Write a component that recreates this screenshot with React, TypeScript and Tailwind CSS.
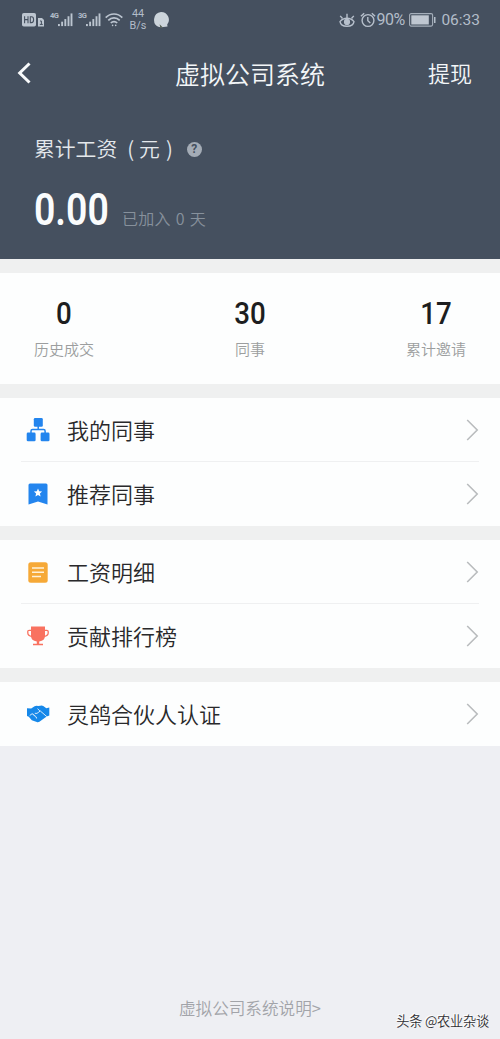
import React from "react";

const SANS = "font-['Noto_Sans_CJK_SC',sans-serif]";

function Signal() {
  return (
    <svg width="16" height="14" viewBox="0 0 16 14" fill="#bcc5d0" className="block">
      <rect x="0" y="11.3" width="2" height="2.2" />
      <rect x="3.4" y="8.8" width="2" height="4.7" />
      <rect x="6.8" y="6" width="2" height="7.5" />
      <rect x="10.2" y="3" width="2" height="10.5" />
      <rect x="13.4" y="0" width="2" height="13.5" />
    </svg>
  );
}

function StatusBar() {
  return (
    <div className="flex h-10 items-center pl-[22px] pr-[20px] font-[Roboto,sans-serif] text-[#b3bdc9]">
      <svg width="23" height="14" viewBox="0 0 23 14" className="shrink-0">
        <rect x="0" y="0" width="14" height="13.5" rx="1.8" fill="#bcc5d0" />
        <path d="M2.6 3.2v7M6 3.2v7M2.6 6.6H6M8.3 3.8v5.8h1.2c1.500 0 2.100-.9 2.100-2.900s-.6-2.900-2.100-2.900z" fill="none" stroke="#45505f" strokeWidth="1.1" />
        <path d="M16 5h4l2 2v6.500h-6z" fill="#bcc5d0" />
        <path d="M18 8h1.400v3.400M17.800 11.400h3" fill="none" stroke="#45505f" strokeWidth="1" />
      </svg>
      <div className="ml-[5px] flex w-[23px] shrink-0">
        <span className="-mt-[2px] w-2 text-[7.5px] leading-[9px] font-bold tracking-[-0.6px]">4G</span>
        <Signal />
      </div>
      <div className="ml-[5px] flex w-[23px] shrink-0">
        <span className="-mt-[2px] w-2 text-[7.5px] leading-[9px] font-bold tracking-[-0.6px]">3G</span>
        <Signal />
      </div>
      <svg width="18" height="14" viewBox="0 0 18 14" className="ml-[4px] shrink-0" fill="none" stroke="#bcc5d0" strokeWidth="1.7">
        <path d="M.7 4.6C5.4-.2 12.6-.2 17.3 4.6" />
        <path d="M3.3 7.3c3.2-3.3 8.2-3.3 11.4 0" />
        <path d="M5.8 10c1.8-1.9 4.6-1.9 6.4 0" />
        <circle cx="7.6" cy="12.4" r=".8" fill="#bcc5d0" stroke="none" />
        <circle cx="10.7" cy="12.4" r=".8" fill="#bcc5d0" stroke="none" />
      </svg>
      <div className="ml-[6px] w-[18px] shrink-0 text-center text-[10.800px] leading-[12px]">
        <div>44</div>
        <div>B/s</div>
      </div>
      <svg width="16" height="16" viewBox="0 0 16 16" className="ml-[6px] shrink-0">
        <path d="M8 0a7.800 7.800 0 0 1 6.200 12.600l.3 1.800-2 .3-4.200.5-2.300-.2A7.800 7.800 0 0 1 8 0z" fill="#ccd4db" />
        <path d="m6.600 12.200 3.300 3.300-2.600.2z" fill="#566154" />
      </svg>
      <svg width="16" height="15" viewBox="0 0 16 15" className="ml-auto shrink-0" fill="none" stroke="#b7c0cc" strokeWidth="1.4">
        <path d="M1 8.600c3.600-4.400 10.400-4.400 14 0-1 6.200-13 6.200-14 0z" />
        <circle cx="8" cy="8.900" r="2.400" fill="#b7c0cc" />
        <path d="M8 5V.800M3.500 5.500 1.200 2.900M12.500 5.500l2.300-2.600" />
      </svg>
      <svg width="16" height="16" viewBox="0 0 16 16" className="ml-[5px] shrink-0" fill="none" stroke="#b7c0cc" strokeWidth="1.4">
        <circle cx="8" cy="8.500" r="5.900" />
        <path d="M7.800 5v3.700l2.500 2.300M.9 4.300l3.300-3M15.100 4.300l-3.300-3" />
      </svg>
      <span className="w-[31px] shrink-0 text-[16px] leading-5 tracking-[-0.5px]">90%</span>
      <svg width="27" height="14" viewBox="0 0 27 14" className="ml-[2px] shrink-0">
        <rect x=".6" y=".6" width="23" height="12.500" rx="1.500" fill="none" stroke="#a5afbb" strokeWidth="1.100" />
        <rect x="2.300" y="2.300" width="17.500" height="9.200" fill="#bfc7d1" />
        <rect x="25" y="4" width="1.500" height="6" fill="#b3bdc9" />
      </svg>
      <span className="ml-[5px] shrink-0 text-[15.500px] leading-5">06:33</span>
    </div>
  );
}

function Stat({ value, label }: { value: string; label: string }) {
  return (
    <div className="flex w-[62px] flex-col items-center">
      <span className="block scale-x-[0.88] font-[Roboto,sans-serif] text-[31.5px] leading-8 font-medium text-[#1d1e20]">{value}</span>
      <span className="mt-[9px] text-[15px] leading-5 whitespace-nowrap text-[#9c9e9f] font-[350]">{label}</span>
    </div>
  );
}

function Row({ icon, label }: { icon: React.ReactNode; label: string }) {
  return (
    <div className="flex h-16 items-center pl-[25px] pr-[21px]">
      <span className="flex w-[25px] shrink-0 justify-center">{icon}</span>
      <span className="ml-[17px] pb-[2px] text-[22px] leading-8 text-[#29292b] font-[350]">{label}</span>
      <svg width="13" height="22" viewBox="0 0 13 22" className="ml-auto" fill="none" stroke="#b9bcbe" strokeWidth="1.6">
        <path d="m1.200 1 10 10-10 10" />
      </svg>
    </div>
  );
}

const Divider = () => <div className="-mt-px ml-[21px] mr-[21px] h-px bg-[#eff0f1]" />;

const TeamIcon = () => (
  <svg width="24" height="24" viewBox="0 0 24 24" fill="#2385ee">
    <rect x="7.800" y="0" width="9" height="8.800" rx="1.300" />
    <rect x=".7" y="14.600" width="8.900" height="8.700" rx="1.300" />
    <rect x="14.600" y="14.600" width="8.900" height="8.700" rx="1.300" />
    <path d="M12.200 8v3.400M5 15v-2q0-1.500 1.500-1.500h11.100q1.500 0 1.500 1.500v2" fill="none" stroke="#2385ee" strokeWidth="1.500" />
  </svg>
);

const BookmarkIcon = () => (
  <svg width="20" height="22" viewBox="0 0 20 22">
    <path d="M2 .5h16q1.500 0 1.500 1.500v19.500L10 18.500.5 21.500V2Q.5.5 2 .5z" fill="#2385ee" />
    <path d="m10 5.600 1.200 2.700 2.900.3-2.200 2 .7 2.900-2.600-1.500-2.600 1.500.7-2.900-2.200-2 2.900-.3z" fill="#fff" />
  </svg>
);

const BillIcon = () => (
  <svg width="20" height="21" viewBox="0 0 20 21">
    <rect x=".3" y=".2" width="19.400" height="20.500" rx="2.500" fill="#f6a937" />
    <path d="M4 6h12M4 10.300h12M4 14.500h9" stroke="#fff2da" strokeWidth="1.400" />
  </svg>
);

const TrophyIcon = () => (
  <svg width="22" height="20" viewBox="0 0 22 20" fill="#f97260">
    <path d="M4 .500h14v9.300q0 5-5.800 5.600v2.400h3.800v1.500H6v-1.500h3.800v-2.400Q4 14.800 4 9.800z" />
    <path d="M5 4.300H2.200Q.8 4.300.8 5.600v1.500q0 2.800 4.300 3.500M17 4.300h2.800q1.400 0 1.400 1.300v1.500q0 2.800-4.300 3.500" fill="none" stroke="#f97260" strokeWidth="1.300" />
  </svg>
);

const HandshakeIcon = () => (
  <svg width="24" height="18" viewBox="0 0 24 18">
    <path d="M1 3.200 5.200 3.600 8.600 1.300q1.700-1 3.600-.2L14.300.8q1.500-.5 3 .3l3 2.100 3-.6v8l-2.600 1-7.300 5.100q-1.200.8-2.600.3l-5-1.700-3-3.600-1.800-.6z" fill="#1688e9" />
    <path d="M8.800 8.300q2.300.8 4-1.200l1.400-1.200 6.600 5.700M13.900 5.900 11.500 3.700M3.700 10.500l2.300-1.700q1.600-.2 1.600 1.400 1.800-.2 1.700 1.600 1.700 0 1.300 1.700" fill="none" stroke="#e9f4fd" strokeWidth=".9" />
  </svg>
);

export default function App() {
  return (
    <div className={`flex h-[1039px] w-[500px] flex-col overflow-hidden bg-[#eeeff3] ${SANS}`}>
      <header className="h-[259px] shrink-0 bg-[#45505f]">
        <StatusBar />
        <div className="grid h-[66px] grid-cols-[100px_1fr_100px] items-center text-[#f3f6f8]">
          <svg width="14" height="22" viewBox="0 0 14 22" className="ml-[17px]" fill="none" stroke="#f8fafb" strokeWidth="3">
            <path d="M12.500 1.500 2.700 11l9.800 9.500" />
          </svg>
          <h1 className="text-center text-[25px] leading-9 font-[350]">虚拟公司系统</h1>
          <span className="pb-[2px] pr-[28px] text-right text-[22px] leading-8 font-[350]">提现</span>
        </div>
        <div className="mt-[28px] flex h-7 items-center pl-[34px] text-[20.800px] leading-7 font-[350] text-[#e4e8ec]">
          <span>累计工资</span>
          <span className="ml-[10px]">(</span>
          <span className="ml-[5px]">元</span>
          <span className="ml-[6px]">)</span>
          <span className="mt-[2px] ml-[14px] flex size-[15px] items-center justify-center rounded-full bg-[#a4acb6] font-[Roboto,sans-serif] text-[12px] leading-[15px] font-bold text-[#45505f]">?</span>
        </div>
        <div className="mt-[25px] flex items-baseline pl-[34px]">
          <span className="block w-[75px] origin-left scale-x-[0.86] font-[Roboto,sans-serif] text-[43.5px] leading-[48px] font-semibold text-[#fafcfd]">0.00</span>
          <span className="ml-[13px] text-[16px] leading-6 tracking-[0.3px] [word-spacing:1px] text-[#87919c] font-[350]">已加入 0 天</span>
        </div>
      </header>

      <div className="shrink-0 bg-[#eff0f0] pt-[14px]">
        <section className="flex h-[111px] justify-between bg-[#fdfefe] px-[33px] pt-[25px]">
          <Stat value="0" label="历史成交" />
          <Stat value="30" label="同事" />
          <Stat value="17" label="累计邀请" />
        </section>

        <section className="mt-[14px] h-[128px] bg-[#fdfefe]">
          <Row icon={<TeamIcon />} label="我的同事" />
          <Divider />
          <Row icon={<BookmarkIcon />} label="推荐同事" />
        </section>
        <section className="mt-[14px] h-[128px] bg-[#fdfefe]">
          <Row icon={<BillIcon />} label="工资明细" />
          <Divider />
          <Row icon={<TrophyIcon />} label="贡献排行榜" />
        </section>
        <section className="mt-[14px] h-[64px] bg-[#fdfefe]">
          <Row icon={<HandshakeIcon />} label="灵鸽合伙人认证" />
        </section>
      </div>

      <footer className="mt-auto flex h-[45px] shrink-0">
        <span className="ml-[179px] text-[16.600px] leading-7 whitespace-nowrap text-[#a2a4a9] font-[350]">虚拟公司系统说明&gt;</span>
        <span className="ml-auto mr-[11px] mt-[15px] text-[13.200px] leading-6 tracking-[-0.200px] whitespace-nowrap text-[#303033] font-[350] [text-shadow:-1px_-1px_0_#fff]">头条 @农业杂谈</span>
      </footer>
    </div>
  );
}
